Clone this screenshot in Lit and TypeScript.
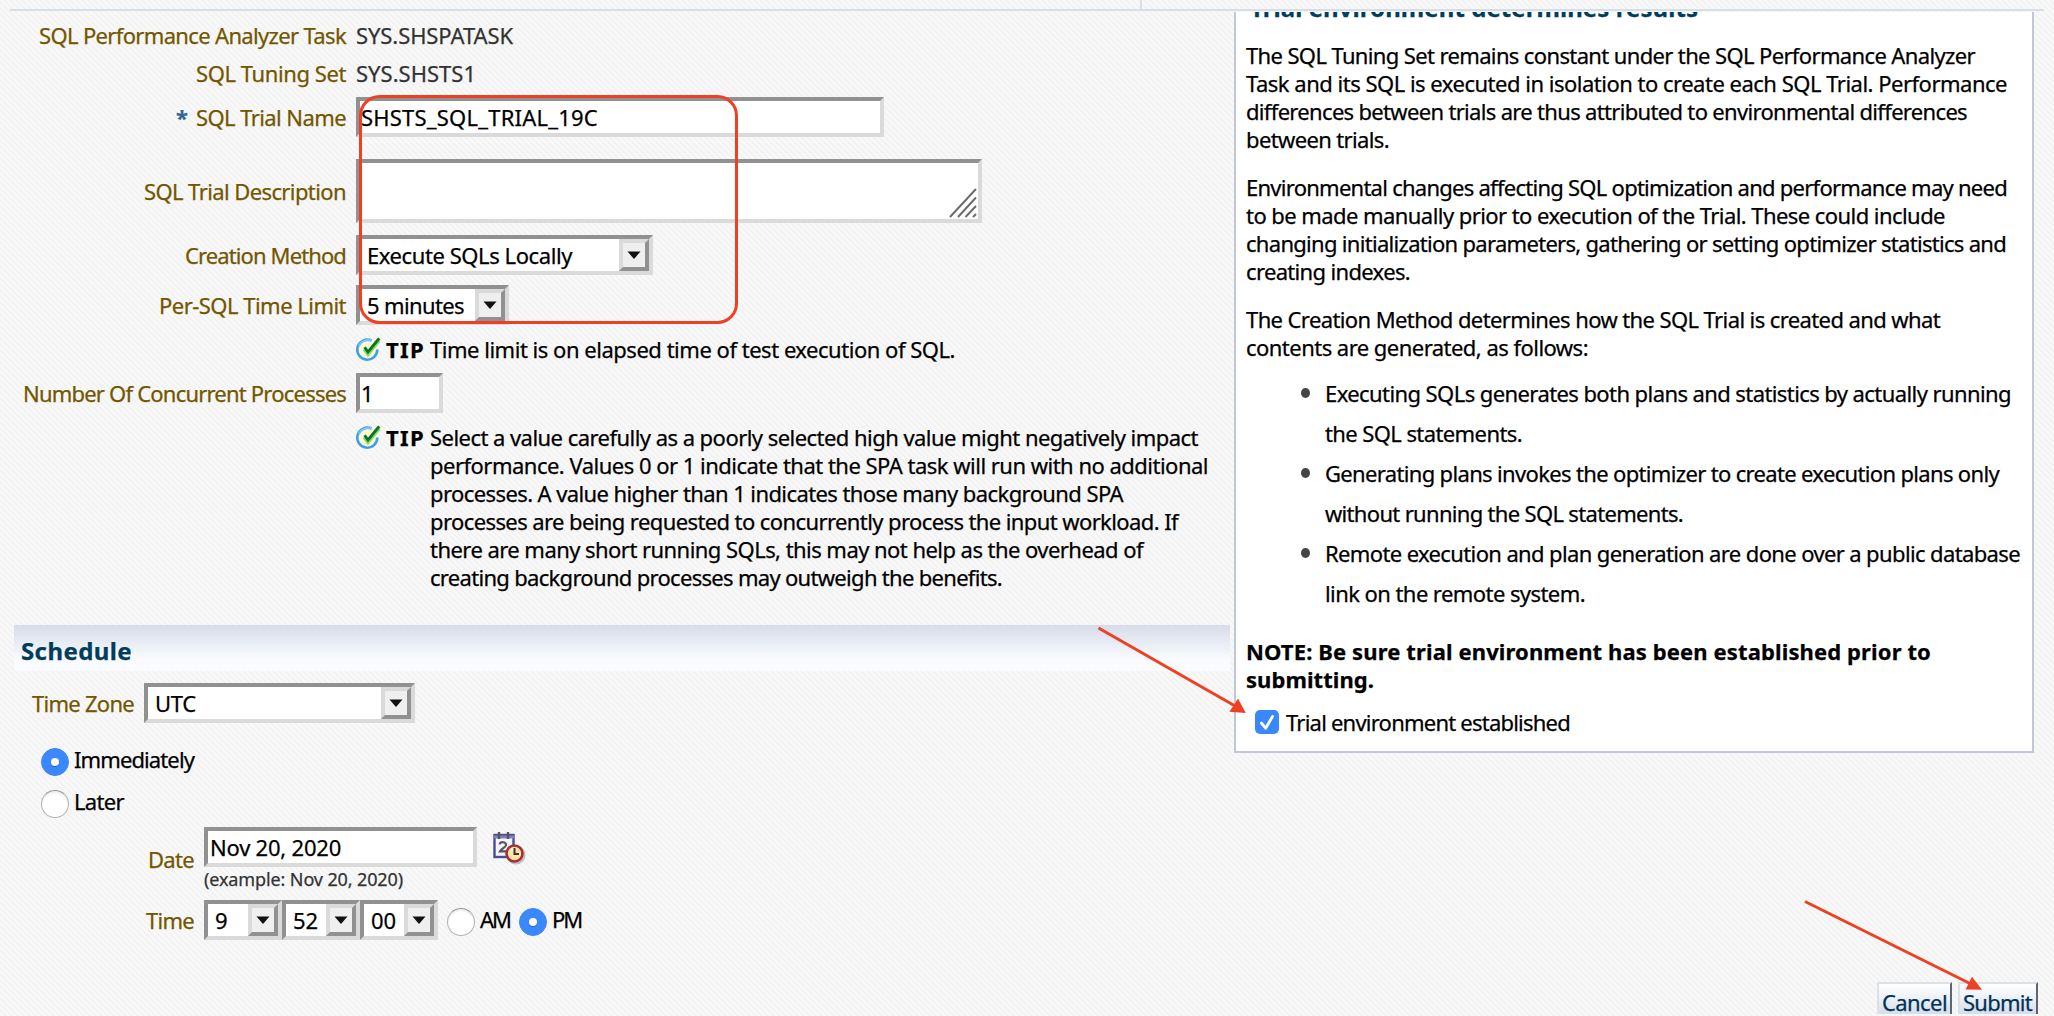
import { LitElement, html, css, svg } from "lit";
import { customElement, property } from "lit/decorators.js";

type Line = [text: string, width: number];

/** One line of text whose tracking is adjusted so that it spans `w` pixels. */
@customElement("fit-line")
class FitLine extends LitElement {
  static styles = css`
    :host { display: inline-block; white-space: nowrap; vertical-align: top; }
    .t { display: inline-block; font-variant-ligatures: none; }
  `;
  @property() text = "";
  @property({ type: Number }) w = 0;
  render() {
    return html`<span class="t">${this.text}</span>`;
  }
  updated() {
    const el = this.renderRoot.querySelector(".t") as HTMLElement;
    el.style.letterSpacing = "0px";
    const natural = el.getBoundingClientRect().width;
    const gap = (this.w - natural) / this.text.length;
    el.style.letterSpacing = `${gap.toFixed(3)}px`;
  }
}

@customElement("bevel-select")
class BevelSelect extends LitElement {
  static styles = css`
    :host { display: block; }
    .box {
      box-sizing: border-box; height: 40px; display: flex; align-items: stretch;
      border: 4px solid; border-color: #919191 #dadada #dadada #919191; background: #fff;
    }
    .value { flex: 1; display: flex; align-items: center; padding-left: 7px; line-height: 28px; }
    .arrow {
      box-sizing: border-box; width: 30px; display: flex; align-items: center; justify-content: center;
      border: 4px solid; border-color: #dadada #919191 #919191 #dadada; background: #efefef;
    }
    .arrow svg { display: block; }
  `;
  @property() text = "";
  @property({ type: Number }) w = 0;
  render() {
    return html`<div class="box">
      <div class="value"><fit-line .text=${this.text} .w=${this.w}></fit-line></div>
      <div class="arrow"><svg width="14" height="8" viewBox="0 0 14 8"><path d="M0.5 0.5h13L7 8z" fill="#111"/></svg></div>
    </div>`;
  }
}

const fit = (text: string, w: number) => html`<fit-line .text=${text} .w=${w}></fit-line>`;
const lines = (ls: Line[]) => ls.map(([t, w]) => html`<div class="line">${fit(t, w)}</div>`);

const tipIcon = svg`<svg class="tip-icon" width="26" height="24" viewBox="0 0 26 24">
  <circle cx="11.5" cy="13" r="9.6" fill="#fdf9d8"/>
  <path d="M15.5 3.6A10 10 0 1 0 21.3 12.6" fill="none" stroke="#3f9fe6" stroke-width="2.6"/>
  <path d="M15.5 3.6A10 10 0 0 0 3 9" fill="none" stroke="#7cc4f4" stroke-width="2.2"/>
  <path d="M8.6 11.8l3.4 4.6L22.8 3" fill="none" stroke="#7be070" stroke-width="4.6"/>
  <path d="M8.6 10.2l3.4 4.8L23.2 1.4" fill="none" stroke="#14701c" stroke-width="2.8"/>
</svg>`;

const calendarIcon = svg`<svg class="cal-icon" width="34" height="34" viewBox="0 0 34 34">
  <rect x="1.5" y="4" width="19" height="22" fill="#f4f4fa" stroke="#4a4a9c" stroke-width="2.4"/>
  <path d="M1 6h20" stroke="#8080bc" stroke-width="3"/>
  <path d="M6 1v7M15 1v7" stroke="#555" stroke-width="2.4"/>
  <path d="M6.6 13.4c.6-3 6.8-3 6.4.6-.2 2.4-4 3-6 6.4h7" fill="none" stroke="#55555e" stroke-width="2.2"/>
  <circle cx="23" cy="24" r="9.5" fill="#000" opacity=".22"/>
  <circle cx="21.5" cy="22.5" r="8" fill="#fde3a8" stroke="#a83030" stroke-width="2.6"/>
  <path d="M18 19a6 6 0 0 1 4-2" stroke="#fffbe8" stroke-width="2" fill="none"/>
  <path d="M21.5 17v6h4.5" fill="none" stroke="#403030" stroke-width="2"/>
</svg>`;

const INTRO: { lines: Line[] }[] = [
  { lines: [
    ["The SQL Tuning Set remains constant under the SQL Performance Analyzer", 729],
    ["Task and its SQL is executed in isolation to create each SQL Trial. Performance", 761],
    ["differences between trials are thus attributed to environmental differences", 721],
    ["between trials.", 143],
  ] },
  { lines: [
    ["Environmental changes affecting SQL optimization and performance may need", 761],
    ["to be made manually prior to execution of the Trial. These could include", 699],
    ["changing initialization parameters, gathering or setting optimizer statistics and", 760],
    ["creating indexes.", 164],
  ] },
  { lines: [
    ["The Creation Method determines how the SQL Trial is created and what", 694],
    ["contents are generated, as follows:", 342],
  ] },
];

const METHODS: Line[][] = [
  [["Executing SQLs generates both plans and statistics by actually running", 686], ["the SQL statements.", 197]],
  [["Generating plans invokes the optimizer to create execution plans only", 674], ["without running the SQL statements.", 358]],
  [["Remote execution and plan generation are done over a public database", 695], ["link on the remote system.", 260]],
];

const PROCESS_TIP: Line[] = [
  ["Select a value carefully as a poorly selected high value might negatively impact", 768],
  ["performance. Values 0 or 1 indicate that the SPA task will run with no additional", 778],
  ["processes. A value higher than 1 indicates those many background SPA", 693],
  ["processes are being requested to concurrently process the input workload. If", 748],
  ["there are many short running SQLs, this may not help as the overhead of", 713],
  ["creating background processes may outweigh the benefits.", 572],
];

@customElement("app-root")
class AppRoot extends LitElement {
  static styles = css`
    :host { display: block; }
    * { box-sizing: border-box; }
    .page {
      position: relative; width: 2054px; height: 1016px; overflow: hidden;
      font: 22px/28px "Noto Sans", "DejaVu Sans", sans-serif; color: #000;
      -webkit-text-stroke: 0.25px currentColor;
      background: #f7f7f7 repeating-linear-gradient(45deg, #f1f1f1 0, #f9f9f9 1.6px, #f9f9f9 2.6px, #f1f1f1 4.243px);
    }
    .topbar { height: 11px; margin: 0 10px; border-bottom: 2px solid #d5dfe9; }
    .topbar-cell { width: 1132px; height: 9px; border-right: 2px solid #d5dfe9; }
    .main { display: flex; height: 971px; }
    .left { width: 1230px; display: flex; flex-direction: column; }
    .row { display: flex; align-items: center; }
    .label { width: 346px; margin-right: 10px; text-align: right; color: #735600; display: flex; justify-content: flex-end; }
    .star { width: 12px; margin-right: 8px; font-weight: 700; color: #336699; }
    .plain { color: #333; }
    .field {
      height: 40px; border: 4px solid; border-color: #919191 #dadada #dadada #919191;
      background: #fff; padding: 2px 0 2px 1px;
    }
    .r1 { margin-top: 10px; height: 28px; }
    .r2 { margin-top: 10px; height: 28px; }
    .r3 { margin-top: 10px; }
    .r4 { margin-top: 22px; }
    .r5 { margin-top: 12px; }
    .r6 { margin-top: 10px; }
    .name { width: 528px; }
    .area { width: 626px; height: 64px; padding: 0; display: flex; align-items: flex-end; justify-content: flex-end; }
    .grip { display: block; margin: 0 1px 1px 0; }
    .method { width: 297px; }
    .limit { width: 153px; }
    .tip { display: flex; margin: 10px 0 10px 356px; }
    .tip-icon { display: block; margin-top: 2px; }
    .tip b { width: 48px; padding-left: 4px; }
    .procs { width: 87px; }
    .line { height: 28px; white-space: nowrap; }
    .schedule {
      margin: 24px 0 0 14px; height: 46px; padding: 12px 0 0 7px; font-size: 24px; font-weight: 700; color: #003d5b;
      background: linear-gradient(#d6dce9, #f9fbfe 75%, #fafbfe);
    }
    .zone { margin-top: 12px; }
    .label.short { width: 134px; margin-right: 10px; }
    .tz { width: 271px; }
    .choice { display: flex; height: 28px; padding-left: 41px; }
    .c1 { margin-top: 22px; }
    .c2 { margin-top: 14px; }
    .radio {
      width: 28px; height: 28px; border-radius: 50%; background: #fff; border: 1px solid #b4b4b4;
      border-top-color: #999; box-shadow: inset 0 2px 2px rgba(0,0,0,.08); margin: 3px 5px 0 0; flex: none;
      display: flex; align-items: center; justify-content: center;
    }
    .radio.on { background: #3b88fd; border-color: #3b88fd; box-shadow: none; }
    .radio.on::after { content: ""; width: 8px; height: 8px; border-radius: 50%; background: #fff; box-shadow: 0 1px 1px rgba(0,0,0,.25); }
    .date { display: flex; margin-top: 12px; height: 73px; }
    .date .label { padding-top: 18px; }
    .label.mid { width: 194px; margin-right: 10px; }
    .date-field { width: 273px; padding: 2px 0 0 2px; }
    .hint { display: block; font-size: 18px; line-height: 24px; color: #333; }
    .cal-icon { display: block; margin: 4px 0 0 16px; }
    .hms { width: 78px; }
    .ampm { display: flex; margin-left: 9px; }
    .ampm .radio { margin: 3px 5px 0 0; }
    .pm { margin-left: 9px; }
    .aside {
      margin: 1px 0 0 4px; width: 800px; height: 741px; overflow: hidden; background: #fff;
      border: 2px solid #c2c7d8; border-top: 0; padding-left: 10px;
    }
    .aside h2 { margin: -18px 0 19px 4px; font-size: 24px; line-height: 28px; color: #003d5b; height: 28px; }
    .para { margin-bottom: 20px; }
    .methods { list-style: none; margin: -8px 0 24px; padding: 0 0 0 55px; }
    .methods li { display: flex; }
    .dot { width: 9px; height: 10px; border-radius: 50%; background: #444; margin: 15px 15px 0 0; }
    .methods .line { height: 40px; line-height: 40px; }
    .note { font-weight: 700; }
    .check { display: flex; margin: 15px 0 0 9px; height: 28px; }
    .box { display: block; margin: 2px 7px 0 0; }
    .footer { display: flex; justify-content: flex-end; gap: 6px; padding-right: 16px; }
    .button {
      height: 32px; overflow: hidden; border: 2px solid #dde1e7; border-right-color: #5e6470; border-bottom: 0;
      background: linear-gradient(#fff, #f4f6fa 30%, #d6deeb); color: #003355; padding: 4px 0 0 3px;
    }
    .cancel { width: 75px; }
    .submit { width: 80px; }
    .marks { position: absolute; left: 0; top: 0; }
  `;

  render() {
    return html`<div class="page">
      <div class="topbar"><div class="topbar-cell"></div></div>
      <div class="main">
        <div class="left">
          <div class="row r1"><div class="label">${fit("SQL Performance Analyzer Task", 307)}</div><div class="plain">${fit("SYS.SHSPATASK", 157)}</div></div>
          <div class="row r2"><div class="label">${fit("SQL Tuning Set", 150)}</div><div class="plain">${fit("SYS.SHSTS1", 120)}</div></div>
          <div class="row r3"><div class="label"><span class="star">*</span>${fit("SQL Trial Name", 150)}</div><div class="field name">${fit("SHSTS_SQL_TRIAL_19C", 237)}</div></div>
          <div class="row r4"><div class="label">${fit("SQL Trial Description", 202)}</div>
            <div class="field area"><svg class="grip" width="29" height="30" viewBox="0 0 29 30"><path d="M2 29L28 1M10 29L28 9.5M17.5 29L28 18M25 29l3-3" stroke="#6c6c6c" stroke-width="2"/></svg></div></div>
          <div class="row r5"><div class="label">${fit("Creation Method", 161)}</div><bevel-select class="method" .text=${"Execute SQLs Locally"} .w=${205}></bevel-select></div>
          <div class="row r6"><div class="label">${fit("Per-SQL Time Limit", 187)}</div><bevel-select class="limit" .text=${"5 minutes"} .w=${97}></bevel-select></div>
          <div class="tip">${tipIcon}<b>${fit("TIP", 39)}</b><div>${lines([["Time limit is on elapsed time of test execution of SQL.", 525]])}</div></div>
          <div class="row"><div class="label">${fit("Number Of Concurrent Processes", 323)}</div><div class="field procs">${fit("1", 13)}</div></div>
          <div class="tip">${tipIcon}<b>${fit("TIP", 39)}</b><div>${lines(PROCESS_TIP)}</div></div>
          <div class="schedule">${fit("Schedule", 111)}</div>
          <div class="row zone"><div class="label short">${fit("Time Zone", 102)}</div><bevel-select class="tz" .text=${"UTC"} .w=${41}></bevel-select></div>
          <div class="choice c1"><span class="radio on"></span>${fit("Immediately", 120)}</div>
          <div class="choice c2"><span class="radio"></span>${fit("Later", 50)}</div>
          <div class="date"><div class="label mid">${fit("Date", 46)}</div>
            <div><div class="field date-field">${fit("Nov 20, 2020", 131)}</div><span class="hint">${fit("(example: Nov 20, 2020)", 199)}</span></div>${calendarIcon}</div>
          <div class="row"><div class="label mid">${fit("Time", 48)}</div>
            <bevel-select class="hms" .text=${"9"} .w=${13}></bevel-select><bevel-select class="hms" .text=${"52"} .w=${25}></bevel-select><bevel-select class="hms" .text=${"00"} .w=${25}></bevel-select>
            <div class="ampm"><span class="radio"></span>${fit("AM", 30)}</div><div class="ampm pm"><span class="radio on"></span>${fit("PM", 29)}</div></div>
        </div>
        <div class="aside">
          <h2>${fit("Trial environment determines results", 448)}</h2>
          ${INTRO.map((p) => html`<div class="para">${lines(p.lines)}</div>`)}
          <ul class="methods">${METHODS.map((m) => html`<li><span class="dot"></span><div>${lines(m)}</div></li>`)}</ul>
          <div class="note">${lines([["NOTE: Be sure trial environment has been established prior to", 685], ["submitting.", 128]])}</div>
          <div class="check"><svg class="box" width="24" height="24" viewBox="0 0 24 24"><rect width="24" height="24" rx="5" fill="#3b88fd"/><path d="M6.4 13l4.2 5.2L17.6 6.4" fill="none" stroke="#fff" stroke-width="2.8" stroke-linecap="round" stroke-linejoin="round"/></svg>${fit("Trial environment established", 284)}</div>
        </div>
      </div>
      <div class="footer"><div class="button cancel">${fit("Cancel", 65)}</div><div class="button submit">${fit("Submit", 69)}</div></div>
      <svg class="marks" width="2054" height="1016" viewBox="0 0 2054 1016" fill="none">
        <rect x="360.5" y="96.5" width="376" height="226" rx="19" stroke="#ee4023" stroke-width="3"/>
        <g stroke="#ee4023" stroke-width="3"><path d="M1098.5 628L1236 706.5M1805 901.5L1971 984"/></g>
        <path d="M1245.8 713L1229.4 711.8L1238 698.6zM1982 989.8L1965.6 989.4L1972 976.8z" fill="#ee4023"/>
      </svg>
    </div>`;
  }
}
